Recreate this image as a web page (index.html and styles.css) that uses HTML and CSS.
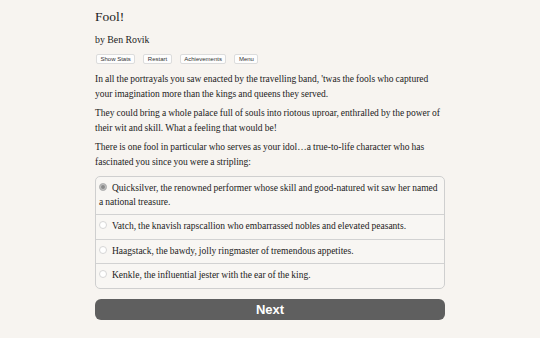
FILE: index.html
```html
<!DOCTYPE html>
<html>
<head>
<meta charset="utf-8">
<link rel="stylesheet" href="styles.css">
</head>
<body>
<div class="page">
  <h1 class="title">Fool!</h1>
  <div class="author">by Ben Rovik</div>
  <div class="buttons">
    <button class="btn">Show Stats</button>
    <button class="btn">Restart</button>
    <button class="btn">Achievements</button>
    <button class="btn">Menu</button>
  </div>
  <p>In all the portrayals you saw enacted by the travelling band, 'twas the fools who captured your imagination more than the kings and queens they served.</p>
  <p>They could bring a whole palace full of souls into riotous uproar, enthralled by the power of their wit and skill. What a feeling that would be!</p>
  <p>There is one fool in particular who serves as your idol…a true-to-life character who has fascinated you since you were a stripling:</p>
  <div class="choices">
    <div class="choice"><span class="radio checked"></span>Quicksilver, the renowned performer whose skill and good-natured wit saw her named a national treasure.</div>
    <div class="choice"><span class="radio"></span>Vatch, the knavish rapscallion who embarrassed nobles and elevated peasants.</div>
    <div class="choice"><span class="radio"></span>Haagstack, the bawdy, jolly ringmaster of tremendous appetites.</div>
    <div class="choice"><span class="radio"></span>Kenkle, the influential jester with the ear of the king.</div>
  </div>
  <button class="next">Next</button>
</div>
</body>
</html>
```

FILE: styles.css
```css
html, body {
  margin: 0;
  padding: 0;
  background: #f7f4f0;
}
body {
  font-family: "Liberation Serif", "Times New Roman", serif;
  color: #222;
}
.page {
  width: 350px;
  margin: 0 auto;
  padding-top: 8px;
}
.title {
  font-size: 13.5px;
  font-weight: normal;
  margin: 0;
  line-height: 18px;
}
.author {
  font-size: 9.8px;
  margin-top: 7px;
  line-height: 14px;
}
.buttons {
  display: flex;
  gap: 8px;
  margin-top: 7px;
  margin-left: 1px;
}
.btn {
  font-family: "Liberation Sans", Arial, sans-serif;
  font-size: 6px;
  color: #333;
  background: #fdfdfd;
  border: 1px solid #dcdcdc;
  border-radius: 2px;
  padding: 0 3.5px;
  height: 10px;
  line-height: 8px;
}
p {
  font-size: 9.5px;
  word-spacing: -0.3px;
  line-height: 14.5px;
  margin: 5px 0 0;
}
.buttons + p {
  margin-top: 8px;
}
.choices {
  margin-top: 7px;
  border: 1px solid #cfcfcf;
  border-radius: 5px;
  background: #f8f6f3;
}
.choice {
  font-size: 9.5px;
  word-spacing: -0.3px;
  line-height: 13.5px;
  padding: 5px 4px 5px 3px;
  border-top: 1px solid #d2d2d2;
}
.choice:first-child {
  border-top: none;
}
.radio {
  display: inline-block;
  width: 6px;
  height: 6px;
  border-radius: 50%;
  border: 1px solid #d6d6d6;
  background: #fff;
  margin-right: 5px;
  vertical-align: 0;
}
.radio.checked {
  background: #8a8a8a;
  border-color: #b8b8b8;
  box-shadow: inset 0 0 0 1px #c4c4c4;
}
.next {
  display: block;
  width: 100%;
  margin-top: 10px;
  height: 21px;
  border: none;
  border-radius: 6px;
  background: #5f5f5f;
  color: #fff;
  font-family: "Liberation Sans", Arial, sans-serif;
  font-weight: bold;
  font-size: 13px;
  padding: 0;
}
```
